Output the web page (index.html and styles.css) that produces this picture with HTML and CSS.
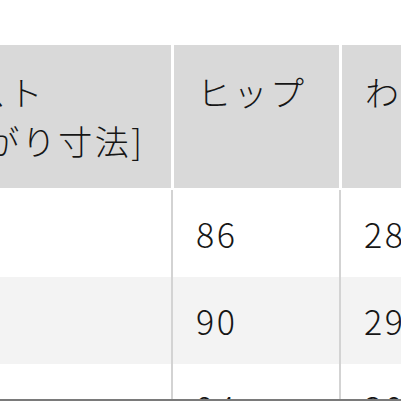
FILE: index.html
```html
<!DOCTYPE html>
<html lang="ja">
<head>
<meta charset="utf-8">
<title>サイズ表</title>
<link rel="stylesheet" href="styles.css">
</head>
<body>
<div class="sheet">
  <div class="row head">
    <div class="cell">ウエスト<br>[仕上がり寸法]</div>
    <div class="cell">ヒップ</div>
    <div class="cell">わたり</div>
  </div>
  <div class="row">
    <div class="cell"></div>
    <div class="cell">86</div>
    <div class="cell">28</div>
  </div>
  <div class="row alt">
    <div class="cell"></div>
    <div class="cell">90</div>
    <div class="cell">29</div>
  </div>
  <div class="row">
    <div class="cell"></div>
    <div class="cell">94</div>
    <div class="cell">30</div>
  </div>
</div>
<div class="edge"></div>
</body>
</html>
```
FILE: styles.css
```css
html, body {
  margin: 0;
  padding: 0;
  height: 401px;
  overflow: hidden;
  background: #ffffff;
}

body {
  font-family: "Noto Sans CJK JP", "Noto Sans", sans-serif;
  font-weight: 300;
  color: #161616;
}

.sheet {
  margin-top: 45px;
  margin-left: -124px;
  width: 700px;
  display: flex;
  flex-direction: column;
}

.row {
  display: grid;
  grid-template-columns: 295px 168px 1fr;
  height: 87px;
}

.row .cell {
  padding-left: 23px;
  font-size: 34px;
  letter-spacing: 2.5px;
  line-height: 49px;
  display: flex;
  align-items: center;
  white-space: nowrap;
}

.row .cell + .cell {
  border-left: 2px solid #d3d3d3;
}

.row.alt {
  background: #f3f3f3;
}

.row.head {
  height: 143px;
  margin-bottom: 2px;
}

.row.head .cell {
  background: #d9d9d9;
  align-items: flex-start;
  padding-top: 22px;
  box-sizing: border-box;
}

.row.head .cell + .cell {
  border-left: 3px solid #ffffff;
}

.edge {
  position: fixed;
  left: 0;
  right: 0;
  bottom: 0;
  height: 2px;
  background: #7a7a7a;
}
```
